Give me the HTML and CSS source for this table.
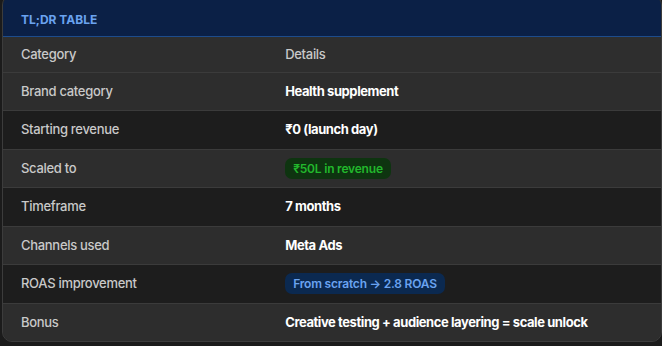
FILE: index.html
```html
<!DOCTYPE html>
<html lang="en">
<head>
<meta charset="utf-8">
<link rel="stylesheet" href="styles.css">
</head>
<body>
<div class="card">
  <div class="card-head">TL;DR TABLE</div>
  <table class="tldr">
    <thead>
      <tr><th>Category</th><th>Details</th></tr>
    </thead>
    <tbody>
      <tr><td>Brand category</td><td class="val">Health supplement</td></tr>
      <tr><td>Starting revenue</td><td class="val">₹0 (launch day)</td></tr>
      <tr><td>Scaled to</td><td class="val"><span class="pill pill-green">₹50L in revenue</span></td></tr>
      <tr><td>Timeframe</td><td class="val">7 months</td></tr>
      <tr><td>Channels used</td><td class="val">Meta Ads</td></tr>
      <tr><td>ROAS improvement</td><td class="val"><span class="pill pill-blue">From scratch → 2.8 ROAS</span></td></tr>
      <tr><td>Bonus</td><td class="val">Creative testing + audience layering = scale unlock</td></tr>
    </tbody>
  </table>
</div>
</body>
</html>
```
FILE: styles.css
```css
html, body {
  margin: 0;
  padding: 0;
  background: #1b1b1b;
}
body {
  padding-left: 2px;
  font-family: Inter, "Noto Sans", "Liberation Sans", sans-serif;
  overflow: hidden;
}
.card {
  margin-top: -5px;
  width: 658px;
  border: 1px solid #3c3c3c;
  border-radius: 10px;
  overflow: hidden;
  background: #2c2c2c;
}
.card-head {
  background: #0b2046;
  border-bottom: 1px solid #1d4c8c;
  height: 41px;
  box-sizing: border-box;
  padding: 16px 18px 0;
  font-size: 12px;
  line-height: 15px;
  font-weight: 700;
  color: #6aa3f0;
  letter-spacing: 0;
}
.tldr {
  width: 100%;
  border-collapse: collapse;
  font-size: 13px;
}
.tldr th, .tldr td {
  text-align: left;
  padding: 11px 18px;
  line-height: 15.5px;
  color: #c9c9c9;
  font-weight: 500;
  letter-spacing: -0.3px;
  border-bottom: 1px solid #3b3b3b;
}
.tldr th {
  padding-top: 9.5px;
  padding-bottom: 9.5px;
  background: #2e2e2e;
}
.tldr th:first-child, .tldr td:first-child {
  width: 40%;
}
.tldr th:last-child, .tldr td:last-child {
  padding-left: 19px;
}
.tldr tbody tr:nth-child(odd) td {
  background: #2d2d2d;
}
.tldr tbody tr:nth-child(even) td {
  background: #1d1d1d;
}
.tldr tbody tr:last-child td {
  border-bottom: none;
}
.tldr td.val {
  color: #ffffff;
  font-weight: 700;
  letter-spacing: -0.42px;
}
.pill {
  display: inline-block;
  font-size: 12px;
  font-weight: 600;
  line-height: 15px;
  letter-spacing: -0.2px;
  padding: 3px 8px;
  margin: -3px 0;
  border-radius: 7px;
}
.pill-green {
  background: #0e3410;
  color: #22b82c;
}
.pill-blue {
  background: #0b2950;
  color: #6aa3f0;
}
```
